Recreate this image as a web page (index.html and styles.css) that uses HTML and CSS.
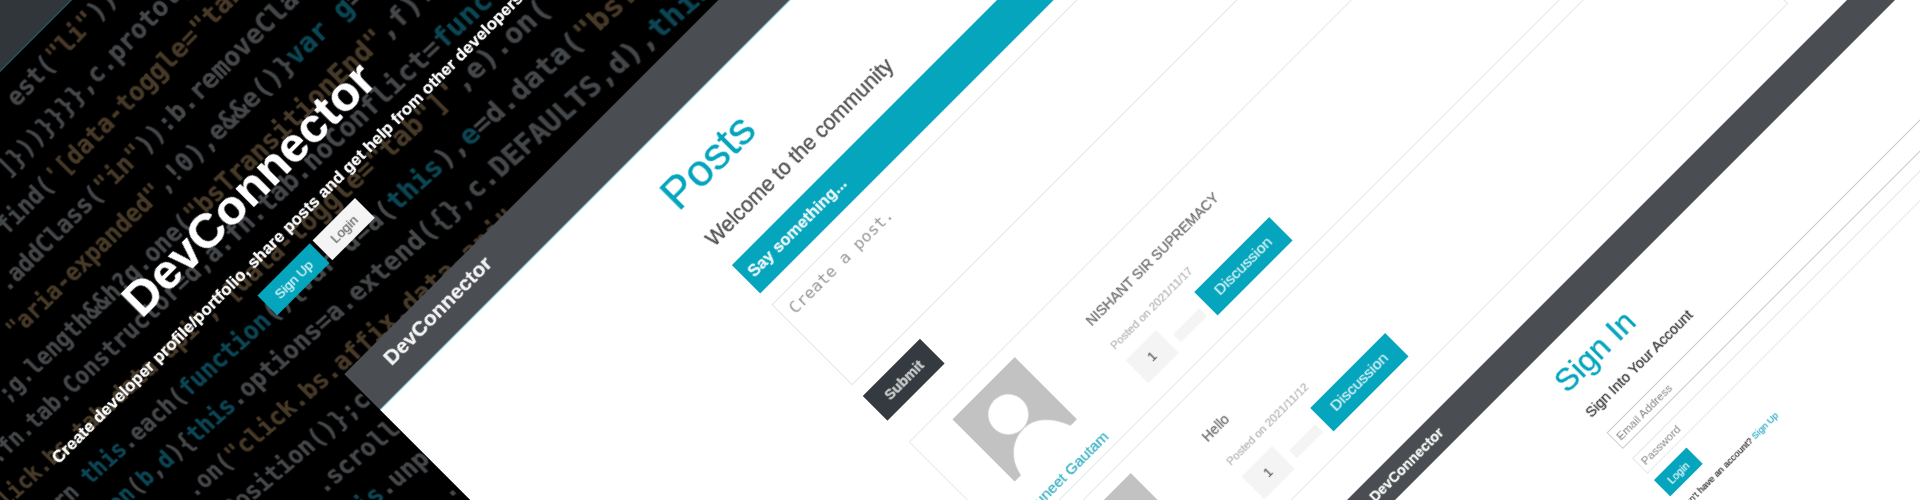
FILE: index.html
```html
<!DOCTYPE html>
<html>
  <head>
    <title>DevConnector</title>
    <meta charset="UTF-8">
    <link rel="stylesheet" href="styles.css">
  </head>
  <body>
    <div class="canvas">

      <!-- landing page -->
      <section class="hero">
        <div class="hero-nav"></div>
<pre class="code">                            est(<span class="b">"li"</span>)),
                        ]}))}}}},c.prototype
                     find(<span class="b">'[data-toggle="tab"]'</span>
                  .addClass(<span class="b">"in"</span>)):b.removeClass
                <span class="b">"aria-expanded"</span>,!0),e&amp;&amp;e()}<span class="t">var</span> <span class="t">g</span>=b
            ;g.length&amp;&amp;h?g.one(<span class="b">"bsTransitionEnd"</span>,f).emulate
       a.fn.tab.Constructor=d,a.fn.tab.noConflict=<span class="t">function</span>
     <span class="b">click.bs.tab.data-api",'[data-toggle="tab"]'</span>,e).on(<span class="b">"bs</span>
     return <span class="t">this</span>.each(<span class="t">function</span>(){var d=a(<span class="t">this</span>),<span class="t">e</span>=d.data(<span class="b">"bs.affix"</span>)
      <span class="t">function</span>(<span class="t">b</span>,<span class="t">d</span>){<span class="t">this</span>.options=a.extend({},c.DEFAULTS,d),<span class="t">this</span>
                 .on(<span class="b">"click.bs.affix.data-api"</span>,a.proxy
            .checkPosition()};c
                        .scrollTop
                       <span class="t">this</span>.unpin
                              .p</pre>
        <div class="hero-inner">
          <h1 class="hero-title">DevConnector</h1>
          <p class="hero-lead">Create developer profile/portfolio, share posts and get help from other developers</p>
          <div class="hero-btns">
            <a class="btn btn-info hero-btn">Sign Up</a>
            <a class="btn btn-light hero-btn">Login</a>
          </div>
        </div>
      </section>

      <!-- posts page -->
      <section class="window posts-window">
        <nav class="navbar navbar-big">DevConnector</nav>
        <div class="posts-main">
          <h2 class="page-title">Posts</h2>
          <p class="page-lead">Welcome to the community</p>
          <div class="say-bar">Say something...</div>
          <textarea class="post-input" placeholder="Create a post."></textarea>
          <a class="btn btn-dark">Submit</a>

          <div class="post">
            <div class="post-user">
              <svg class="avatar" viewBox="0 0 88 88">
                <rect width="88" height="88" fill="#c2c2c2"/>
                <circle cx="43" cy="36" r="20" fill="#fff"/>
                <path d="M9 88C12 70 26 57 44 57C60 57 72 70 79 88Z" fill="#fff"/>
              </svg>
              <a class="post-name">Puneet Gautam</a>
            </div>
            <div class="post-body">
              <p class="post-text">NISHANT SIR SUPREMACY</p>
              <p class="post-date">Posted on 2021/11/17</p>
              <div class="post-actions">
                <a class="like">1</a>
                <a class="dislike"></a>
                <a class="btn btn-info discuss">Discussion</a>
              </div>
            </div>
          </div>

          <div class="post">
            <div class="post-user">
              <svg class="avatar" viewBox="0 0 88 88">
                <rect width="88" height="88" fill="#c2c2c2"/>
                <circle cx="43" cy="36" r="20" fill="#fff"/>
                <path d="M9 88C12 70 26 57 44 57C60 57 72 70 79 88Z" fill="#fff"/>
              </svg>
              <a class="post-name">Puneet Gautam</a>
            </div>
            <div class="post-body">
              <p class="post-text">Hello</p>
              <p class="post-date">Posted on 2021/11/12</p>
              <div class="post-actions">
                <a class="like">1</a>
                <a class="dislike"></a>
                <a class="btn btn-info discuss">Discussion</a>
              </div>
            </div>
          </div>
        </div>
      </section>

      <!-- login page -->
      <section class="window login-window">
        <nav class="navbar navbar-small">DevConnector</nav>
        <div class="login-main">
          <h2 class="login-title">Sign In</h2>
          <p class="login-lead">Sign Into Your Account</p>
          <input class="login-input" type="text" placeholder="Email Address">
          <input class="login-input login-input-pass" type="text" placeholder="Password">
          <a class="btn btn-info login-btn">Login</a>
          <p class="login-foot">Don't have an account? <a class="login-link">Sign Up</a></p>
        </div>
      </section>

    </div>
  </body>
</html>
```
FILE: styles.css
```css
* {
  box-sizing: border-box;
  margin: 0;
  padding: 0;
}

body {
  width: 1920px;
  height: 500px;
  overflow: hidden;
  background: #000;
  font-family: "Liberation Sans", Arial, sans-serif;
}

/* the whole montage is one tilted canvas */
.canvas {
  position: absolute;
  left: 0;
  top: 0;
  width: 4000px;
  height: 2400px;
  transform-origin: 0 0;
  transform: rotate(-45deg) translateX(-800px);
  filter: blur(0.6px);
  text-shadow: 0 0 0.8px currentColor;
}

/* landing */
.hero {
  position: relative;
  width: 1684px;
  height: 1000px;
  background: #000;
  overflow: hidden;
}

.hero-nav {
  height: 51px;
  background: #31363b;
  border-bottom: 1px solid #1d6a7a;
}

.code {
  position: absolute;
  left: 290px;
  top: 55px;
  font-family: "DejaVu Sans Mono", monospace;
  font-size: 26px;
  font-weight: bold;
  line-height: 42.6px;
  color: #45484b;
  transform-origin: 560px 148px;
  transform: perspective(1000px) rotateY(-14.5deg);
}

.code .b {
  color: #483a28;
}

.code .t {
  color: #0c4654;
}

.hero-inner {
  position: relative;
  display: flex;
  flex-direction: column;
  align-items: center;
  padding-top: 233px;
  color: #fff;
}

.hero-title {
  font-size: 49px;
  line-height: 50px;
  font-weight: bold;
}

.hero-lead {
  margin-top: 21px;
  font-size: 16.9px;
  font-weight: bold;
  line-height: 20px;
  white-space: nowrap;
}

.hero-btns {
  display: flex;
  gap: 4px;
  margin-top: 16px;
}

.btn {
  display: flex;
  align-items: center;
  justify-content: center;
  font-size: 15.5px;
}

.btn-info {
  background: #04a5bd;
  color: #d5f1f5;
}

.btn-light {
  background: #f4f4f4;
  color: #777;
}

.btn-dark {
  width: 81px;
  height: 35px;
  margin-top: 15px;
  background: #343a40;
  color: #ccc;
  font-size: 14.5px;
  font-weight: bold;
}

.hero-btn {
  height: 28px;
  padding: 0 13.5px;
  font-size: 13.4px;
}

/* page windows, placed on the canvas */
.window {
  position: absolute;
  width: 3000px;
  background: #fff;
}

.posts-window {
  left: 779px;
  top: 508px;
  height: 798px;
}

.login-window {
  left: 1393px;
  top: 1306px;
  height: 900px;
}

.navbar {
  background: #4a4e53;
  color: #f4f4f4;
  font-weight: bold;
}

.navbar-big {
  height: 51px;
  padding: 9px 0 0 39px;
  font-size: 21px;
  line-height: 24px;
  border-bottom: 1px solid #6fb6c4;
}

.navbar-small {
  height: 34px;
  padding: 9px 0 0 24px;
  font-size: 14.3px;
  line-height: 16px;
}

/* posts */
.posts-main {
  width: 1283px;
  padding: 31px 0 0 351px;
}

.page-title {
  font-size: 45px;
  line-height: 50px;
  font-weight: normal;
  color: #04a5bd;
}

.page-lead {
  margin-top: 19.5px;
  font-size: 21.2px;
  line-height: 26px;
  color: #555;
}

.say-bar {
  height: 40px;
  margin-top: 19.5px;
  padding-left: 7px;
  background: #04a5bd;
  color: #eaf8fa;
  font-size: 16.6px;
  font-weight: bold;
  line-height: 40px;
}

.post-input {
  display: block;
  width: 100%;
  height: 114px;
  margin-top: 16px;
  padding: 8px 9px;
  border: 1px solid #e2e4e4;
  outline: none;
  resize: none;
  font-family: "DejaVu Sans Mono", monospace;
  font-size: 16.6px;
  background: #fff;
}

.post-input::placeholder {
  color: #999;
}

.post {
  display: flex;
  height: 148px;
  margin-top: 16px;
  padding-top: 14px;
  border: 1px solid #e6e8e8;
}

.btn-dark + .post {
  margin-top: 30px;
}

.post-user {
  display: flex;
  flex-direction: column;
  align-items: center;
  width: 180px;
}

.avatar {
  display: block;
  width: 88px;
  height: 88px;
}

.post-name {
  margin-top: 22px;
  font-size: 15.5px;
  line-height: 18px;
  color: #3fb2c6;
  white-space: nowrap;
}

.post-body {
  padding: 19px 0 0 30px;
}

.post-text {
  font-size: 14px;
  line-height: 18px;
  color: #777;
}

.post-date {
  margin-top: 17.5px;
  font-size: 11.4px;
  line-height: 14px;
  color: #bbb;
}

.post-actions {
  display: flex;
  align-items: flex-start;
  margin-top: 12px;
}

.like {
  width: 43px;
  height: 32px;
  background: #f4f4f4;
  color: #666;
  font-size: 12px;
  line-height: 32px;
  text-align: center;
}

.dislike {
  width: 37px;
  height: 11px;
  margin: 15px 0 0 9px;
  background: #f4f4f4;
}

.discuss {
  width: 106px;
  height: 33px;
  margin-left: 8px;
}

/* login */
.login-main {
  width: 887px;
  padding: 18px 0 0 236.5px;
}

.login-title {
  font-size: 32px;
  line-height: 36px;
  font-weight: normal;
  color: #04a5bd;
}

.login-lead {
  margin-top: 13px;
  font-size: 14.4px;
  line-height: 18px;
  color: #444;
}

.login-input {
  display: block;
  width: 100%;
  height: 23px;
  margin-top: 17px;
  padding: 0 4px;
  border: 1px solid #ccc;
  outline: none;
  font-family: "Liberation Sans", Arial, sans-serif;
  font-size: 11.5px;
}

.login-input::placeholder {
  color: #888;
}

.login-input-pass {
  height: 22px;
  margin-top: 13px;
  border-color: #e6e6e6;
}

.login-btn {
  width: 46px;
  height: 23px;
  margin-top: 9px;
  font-size: 10.5px;
}

.login-foot {
  margin-top: 11px;
  font-size: 9.4px;
  line-height: 12px;
  color: #444;
}

.login-link {
  color: #3fb2c6;
}
```
